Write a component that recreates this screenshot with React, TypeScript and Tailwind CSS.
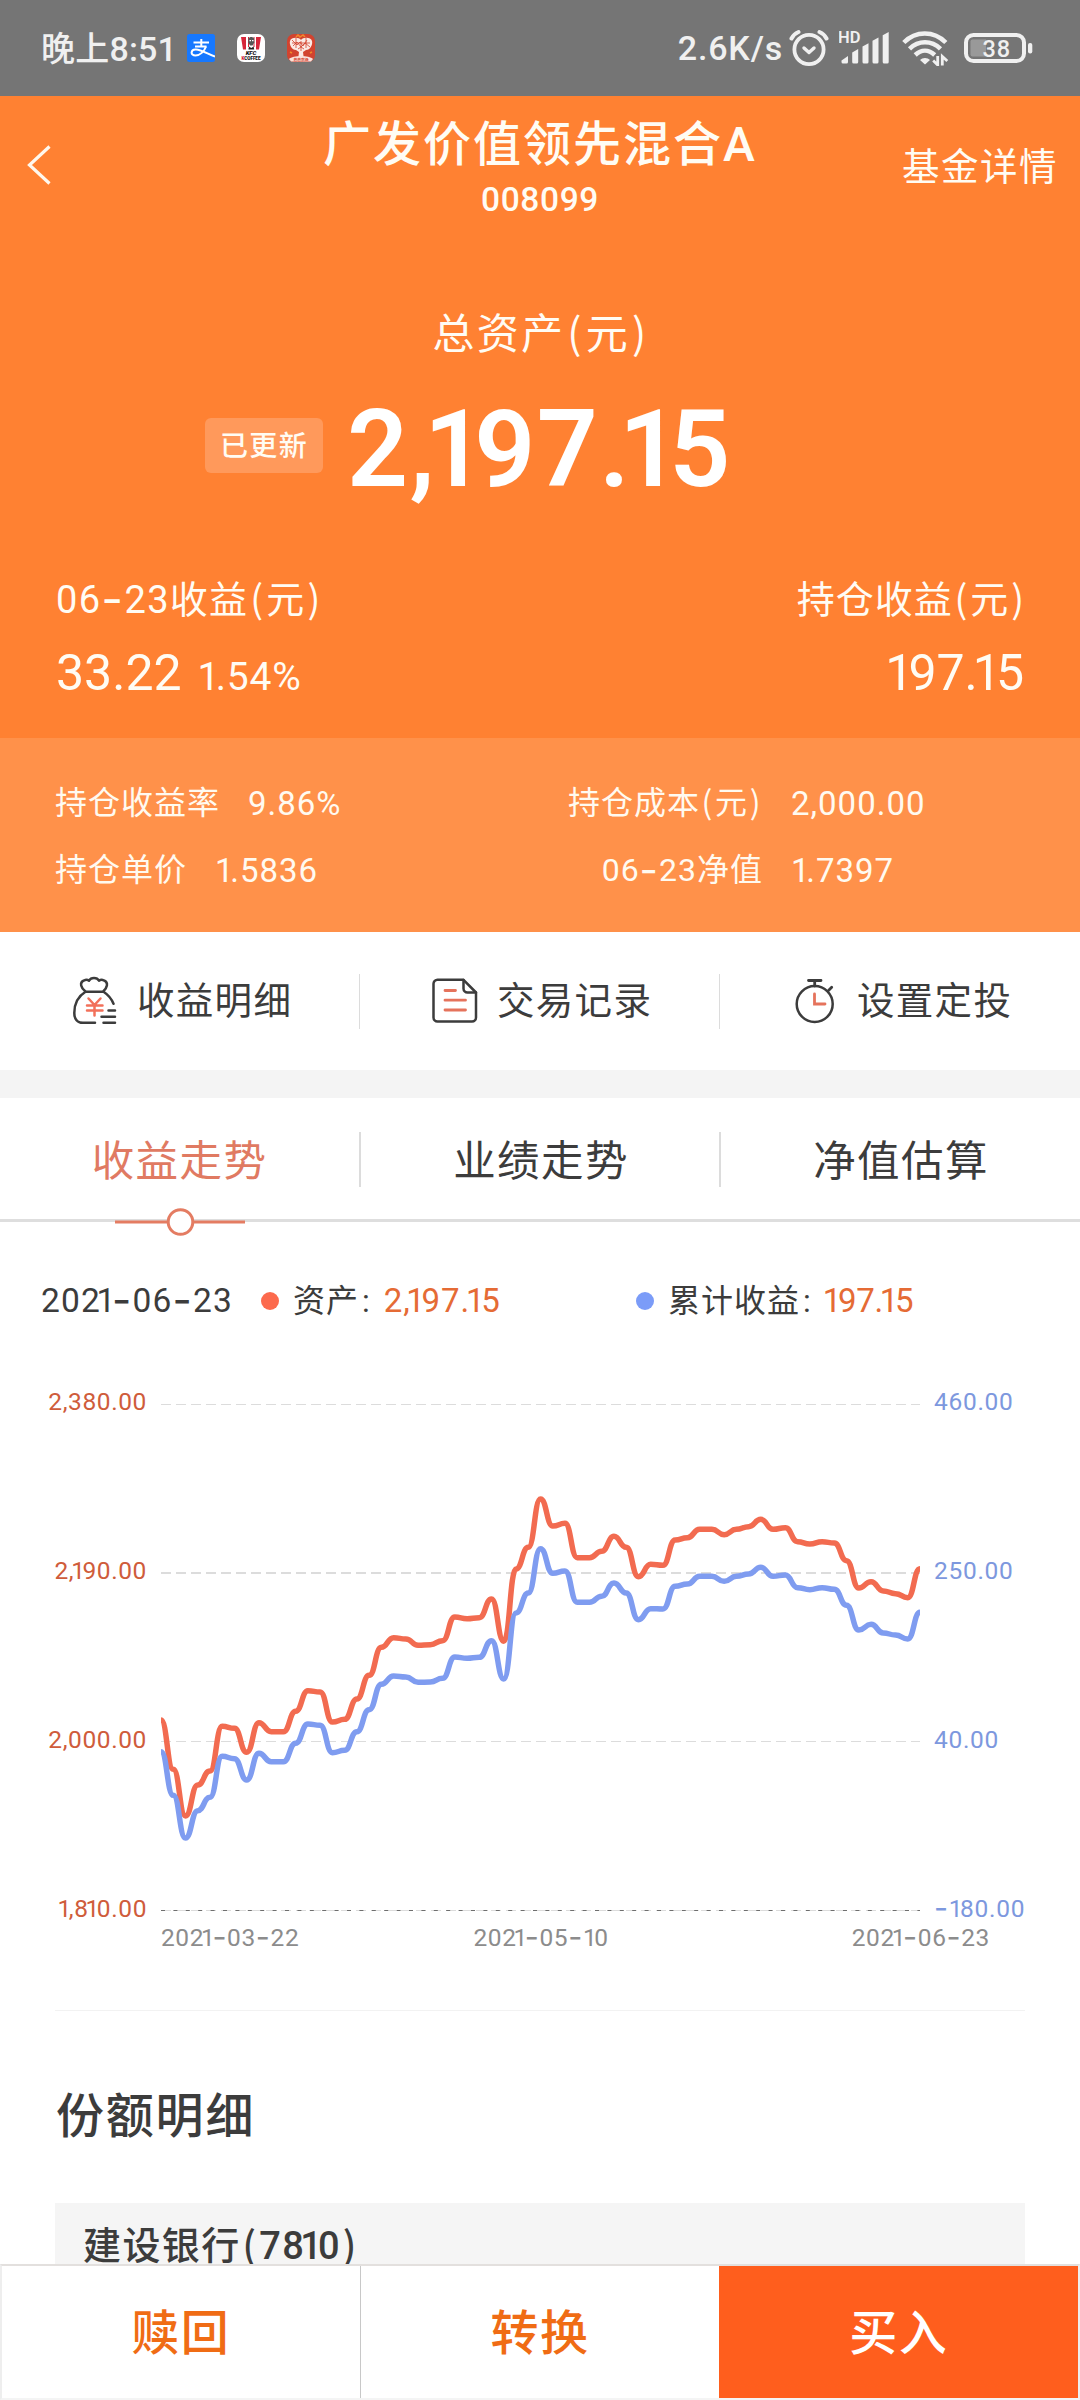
import React from 'react';
import clsx from 'clsx';

interface TextProps {
  children: string;
  className?: string;
}

interface Stat {
  label: string;
  value: string;
}

const leftStats: Stat[] = [
  { label: '持仓收益率', value: '9.86%' },
  { label: '持仓单价', value: '1.5836' },
];

const rightStats: Stat[] = [
  { label: '持仓成本(元)', value: '2,000.00' },
  { label: '06-23净值', value: '1.7397' },
];

const tabs = ['收益走势', '业绩走势', '净值估算'];

const assetAxis = ['2,380.00', '2,190.00', '2,000.00', '1,810.00'];
const profitAxis = ['460.00', '250.00', '40.00', '-180.00'];

// Heights in thirds of a pixel, one entry per trading day
const assetSeries = [
  750, 898, 1038, 945, 903, 769, 775, 847, 758, 785, 785, 724, 662, 666, 756, 748,
  687, 616, 532, 503, 507, 526, 524, 512, 441, 446, 443, 387, 514, 297, 232, 87,
  168, 160, 263, 263, 244, 199, 232, 320, 283, 286, 210, 203, 178, 178, 194, 178,
  170, 148, 178, 173, 215, 222, 215, 219, 272, 354, 335, 363, 371, 383, 296,
];

const profitSeries = [
  845, 976, 1104, 1022, 982, 859, 866, 930, 850, 875, 875, 820, 762, 766, 848, 841,
  785, 719, 643, 618, 621, 637, 636, 625, 561, 565, 562, 512, 627, 429, 369, 236,
  310, 303, 397, 397, 379, 339, 369, 449, 416, 417, 349, 342, 319, 319, 334, 319,
  312, 292, 319, 315, 353, 359, 353, 358, 406, 480, 463, 489, 495, 507, 427,
];

const CHART_WIDTH = 759;
const CHART_OFFSET = 83;

const buildPath = (series: number[]): string => {
  const step = CHART_WIDTH / (series.length - 1);
  return series
    .map((value, i) => {
      const x = i * step;
      const y = value / 3 + CHART_OFFSET;
      if (i === 0) return `M${x} ${y}`;
      const mid = x - step / 2;
      const prev = series[i - 1] / 3 + CHART_OFFSET;
      return `C${mid} ${prev} ${mid} ${y} ${x} ${y}`;
    })
    .join(' ');
};

// Figures with a narrow 1, a long dash and roomy brackets
function Num({ children, className }: TextProps) {
  return (
    <span className={className}>
      {children.split(/([^1](?=1)|[1()-])/).map((part, i) => {
        if (part === '-') {
          return <span key={i} className="align-[-0.07em] font-['Inter'] text-[1.25em] leading-[0]">-</span>;
        }
        if (part === '(' || part === ')') {
          return <span key={i} className="px-[0.05em] font-['Noto_Sans_CJK_SC'] leading-[0]">{part}</span>;
        }
        if (i % 2 === 1) return <span key={i} className="tracking-[-0.1em]">{part}</span>;
        return part;
      })}
    </span>
  );
}

function AlipayIcon() {
  return (
    <svg width="28" height="28" viewBox="0 0 28 28" fill="none">
      <rect width="28" height="28" rx="2.5" fill="#1678ff" />
      <path d="M6.500 8.500h15.500M14.300 5v7.500M8 12.500h11.500" stroke="#fff" strokeWidth="2" />
      <path d="M19 12.500c-1.800 5-6 9-10.500 9-5.500 0-5-6.300.5-6 5 .3 12 4.500 19 7" stroke="#fff" strokeWidth="2" />
    </svg>
  );
}

function KfcIcon() {
  return (
    <svg width="28" height="28" viewBox="0 0 28 28">
      <rect width="28" height="28" rx="7" fill="#fff" />
      <path d="M4 3h5v12.500H6zM11 3h1v10h-1zM16.500 3h1v10h-1zM19 3h5l-2 12.500h-3z" fill="#d6263a" />
      <path d="M11.500 4.500c1-2 4.500-2 5.500 0l.3 4-1.800 3h-2.500l-1.800-3z" fill="#555" />
      <path d="M12.500 6h1.500v1.200h-1.500zM15 6h1.500v1.200H15z" fill="#fff" />
      <path d="M12 12.500l2.300 1.500 2.300-1.500.6 3h-5.800z" fill="#222" />
      <text x="14" y="20.500" textAnchor="middle" fontSize="6" fontWeight="900" fontStyle="italic" fill="#111">KFC</text>
      <text x="14" y="26" textAnchor="middle" fontSize="4.700" fontWeight="900" fill="#111" textLength="19">
        <tspan fill="#d6263a">K</tspan>COFFEE
      </text>
    </svg>
  );
}

function TreeIcon() {
  return (
    <svg width="28" height="28" viewBox="0 0 28 28" fill="none">
      <rect width="28" height="28" rx="7" fill="#d2432f" />
      <path d="M9 3l2-2 2 2 3-2 2 2M3 18l2 1M23 19l2-1" stroke="#f08a2c" strokeWidth="1.500" />
      <path d="M2 25c4-4 20-4 24 0l-2 2.500H4z" fill="#fbe3dc" />
      <path d="M14 6c-2-3-10-3-11 1s2 9 6 9l3 2-.5 4h5l-.5-4 3-2c4 0 7-5 6-9s-9-4-11-1z" fill="#fbe9e4" />
      <path d="M5 6l5 5 3-3 3 4 4-6M6 12l4-4 4 5 4-4 5 4M5 9h18M9 4v10M19 4v10M14 7v10M11 15l3-2 3 2" stroke="#d2432f" strokeWidth=".8" />
      <text x="14" y="26.500" textAnchor="middle" fontSize="3.800" fontWeight="700" fill="#d2432f">芭芭农场</text>
    </svg>
  );
}

function AlarmIcon() {
  return (
    <svg width="40" height="38" viewBox="0 0 40 38" fill="none" stroke="#f0f0f0" strokeLinecap="round">
      <circle cx="20" cy="20.500" r="14.600" strokeWidth="3.800" />
      <path d="M15 19l5 4.500 5-4.500" strokeWidth="3.400" strokeLinejoin="round" />
      <path d="M2.500 9.500c1.500-3 4-5.300 7-6.500M37.500 9.500c-1.500-3-4-5.300-7-6.500" strokeWidth="4" />
    </svg>
  );
}

function SignalIcon() {
  return (
    <svg width="50" height="38" viewBox="0 0 50 38" fill="#f0f0f0">
      <text x="-1" y="14.300" fontSize="16.500" fontWeight="600">HD</text>
      <path d="M2.500 31.500l6.500-4.500v6a1.500 1.500 0 0 1-1.500 1.500h-3.500a1.500 1.500 0 0 1-1.500-1.500z" />
      <path d="M13.200 23.500l6-3.500v13a1.500 1.500 0 0 1-1.500 1.500h-3a1.500 1.500 0 0 1-1.500-1.500z" />
      <path d="M23.500 17.500l6-3.200v18.700a1.500 1.500 0 0 1-1.500 1.500h-3a1.500 1.500 0 0 1-1.500-1.500z" />
      <path d="M33.500 11.700l6-3.200v24.500a1.500 1.500 0 0 1-1.500 1.500h-3a1.500 1.500 0 0 1-1.500-1.500z" />
      <path d="M43.700 6.200l6-3.200v30a1.500 1.500 0 0 1-1.500 1.500h-3a1.500 1.500 0 0 1-1.500-1.500z" />
    </svg>
  );
}

function WifiIcon() {
  return (
    <svg width="47" height="36" viewBox="0 0 47 36" fill="none" stroke="#f0f0f0" strokeWidth="4.500">
      <path d="M1.800 12.500c12-12 30-12 42 0" />
      <path d="M7.500 18.800c9-8.700 22-8.700 31 0" />
      <path d="M13.200 25c6-5.700 13.500-5.700 19.500 0" />
      <path d="M23 34.500l-5-4.500c2.500-2.700 7.500-2.700 10 0z" fill="#f0f0f0" stroke="none" />
      <path d="M35.500 26v8.500l-4-4.500M40 35.500V27l4.500 4.500" stroke="#757575" strokeWidth="6" />
      <path d="M35.700 26v9l-4.500-4.500M40.300 35.500v-9l5 4.500" strokeWidth="2.800" />
    </svg>
  );
}

function BatteryIcon() {
  return (
    <svg width="69" height="30" viewBox="0 0 69 30">
      <rect x="2" y="2" width="58" height="26" rx="7.500" fill="none" stroke="#f0f0f0" strokeWidth="4" />
      <path d="M8.500 6.500H22v17H8.500a2 2 0 0 1-2-2v-13a2 2 0 0 1 2-2z" fill="#999" />
      <rect x="64" y="10" width="4.300" height="10.500" rx="2" fill="#f0f0f0" />
      <text x="18.500" y="23.600" fontSize="23.500" fontWeight="500" fill="#f0f0f0" textLength="27.500">38</text>
    </svg>
  );
}

function BagIcon() {
  return (
    <svg width="46" height="50" viewBox="0 0 46 50" fill="none" stroke="#3c3c3c" strokeWidth="2.500" strokeLinecap="round" strokeLinejoin="round">
      <path d="M13.500 15.800h18M13.500 15.500C9 12 7 6.500 12 4.500c2-1 4-.5 5 .2 2-3.600 8-3.600 10 0 1-.7 3-1.200 5-.2 5 2 3 7.500-.8 11" />
      <path d="M13.500 15.800C5 21 2.300 29 2.300 37c0 6 3 9.800 8.500 9.800H23M31.500 15.800c5 3.200 8 7.200 10 12" />
      <path d="M36.500 34.500h6.500M29.500 40.700H43M31.500 46.800H43" />
      <path d="M16.500 22.500l6 6.500 6-6.500M22.500 29v10.500M15 29.500h15.500M15 34.500h15.500" stroke="#f2705a" />
    </svg>
  );
}

function RecordIcon() {
  return (
    <svg width="46" height="46" viewBox="0 0 46 46" fill="none" stroke="#3c3c3c" strokeWidth="2.500" strokeLinecap="round" strokeLinejoin="round">
      <path d="M31.500 1.800H5.500a4 4 0 0 0-4 4v33.700a4 4 0 0 0 4 4H40a4 4 0 0 0 4-4V14.500z" />
      <path d="M31.500 2v8.500a4 4 0 0 0 4 4H44" />
      <path d="M13 12.500h10.500M13 22.200h20.500M13 32h20.500" stroke="#e5735c" strokeWidth="2.800" />
    </svg>
  );
}

function StopwatchIcon() {
  return (
    <svg width="40" height="46" viewBox="0 0 40 46" fill="none" stroke="#3c3c3c" strokeWidth="2.500" strokeLinecap="round">
      <circle cx="19.700" cy="26" r="18" />
      <path d="M13.500 2.500h12.500M19.700 2.500V8M33.500 12.500l3.200-3.200" strokeWidth="2.800" />
      <path d="M19.500 16v10h10.500" stroke="#e5735c" strokeWidth="2.800" />
    </svg>
  );
}

const actions = [
  { label: '收益明细', icon: <BagIcon />, pad: 'pl-[72px] gap-[19px]' },
  { label: '交易记录', icon: <RecordIcon />, pad: 'pl-[72px] gap-[19px]' },
  { label: '设置定投', icon: <StopwatchIcon />, pad: 'pl-[75px] gap-[22px]' },
];

function StatusBar() {
  return (
    <div className="flex h-24 items-center bg-[#757575] pl-[41px] pr-[47px] text-[34px] leading-none font-medium text-[#f0f0f0]">
      <div className="w-[146px] pt-px tracking-[0.200px] whitespace-nowrap">晚上8:51</div>
      <div className="flex gap-[22px]">
        <AlipayIcon />
        <KfcIcon />
        <TreeIcon />
      </div>
      <div className="ml-auto flex items-center">
        <span className="mr-1.5 tracking-[0.800px]">2.6K/s</span>
        <AlarmIcon />
        <span className="ml-[10px]"><SignalIcon /></span>
        <span className="ml-[13px]"><WifiIcon /></span>
        <span className="ml-[15px]"><BatteryIcon /></span>
      </div>
    </div>
  );
}

function Summary() {
  return (
    <div className="h-[642px] bg-[#ff8132] pt-5 text-[#fffcf4]">
      <div className="grid h-[108px] grid-cols-[1fr_auto_1fr] items-center">
        <svg className="mb-3 ml-[26px]" width="26" height="42" viewBox="0 0 26 42" fill="none" stroke="#fff8ee" strokeWidth="3.200">
          <path d="M23.500 2.500L3.500 21l20 18.500" />
        </svg>
        <div className="text-center">
          <h1 className="text-[48px] leading-[58px] font-medium tracking-[2px]">广发价值领先混合A</h1>
          <div className="text-[33.500px] leading-[52px] font-medium tracking-[0.600px]">008099</div>
        </div>
        <div className="mr-[22px] pb-[7px] text-right text-[37.500px] tracking-[1.500px]">基金详情</div>
      </div>

      <div className="mt-[81px] pl-[3px] text-center text-[42px] leading-[60px] tracking-[2.200px]">
        <Num>总资产(元)</Num>
      </div>

      <div className="mt-6 flex h-[120px] items-center pl-[205px]">
        <div className="mb-[7px] flex h-[55px] w-[118px] items-center justify-center rounded-md bg-[#ff995b] pt-[3px] text-[28px] leading-none font-medium tracking-[1.400px]">
          已更新
        </div>
        <Num className="ml-6 pt-px text-[107px] leading-[120px] font-semibold tracking-[1.300px] text-white">2,197.15</Num>
      </div>

      <div className="mt-[66px] flex justify-between px-[56px]">
        <div>
          <Num className="block text-[38px] leading-[50px] tracking-[1.300px]">06-23收益(元)</Num>
          <div className="mt-[18px] flex items-baseline gap-[16px] leading-[60px]">
            <Num className="text-[50px]">33.22</Num>
            <Num className="text-[39px] tracking-[0.800px]">1.54%</Num>
          </div>
        </div>
        <div className="text-right">
          <Num className="-mr-[3px] block text-[38px] leading-[50px] tracking-[1px]">持仓收益(元)</Num>
          <Num className="mt-[18px] block text-[50px] leading-[60px]">197.15</Num>
        </div>
      </div>
    </div>
  );
}

function Stats() {
  return (
    <div className="flex h-[194px] bg-[#ff914a] pt-8 pl-[55px] text-[32px] leading-[67px] whitespace-nowrap text-[#fffaf0]">
      <div className="w-[513px]">
        {leftStats.map(stat => (
          <div key={stat.label} className="flex gap-7">
            <span className="tracking-[1px]">{stat.label}</span>
            <Num className="text-[33px] tracking-[1px]">{stat.value}</Num>
          </div>
        ))}
      </div>
      <div>
        {rightStats.map(stat => (
          <div key={stat.label} className="flex gap-7">
            <Num className="w-[195px] text-right tracking-[1px]">{stat.label}</Num>
            <Num className="text-[33px] tracking-[1px]">{stat.value}</Num>
          </div>
        ))}
      </div>
    </div>
  );
}

function Actions() {
  return (
    <div className="grid h-[138px] grid-cols-3 items-center text-[37.500px] leading-none tracking-[1.300px] text-[#3c3c3c]">
      {actions.map((action, i) => (
        <div
          key={action.label}
          className={clsx('flex h-[55px] items-center', action.pad, i < 2 && 'border-r border-[#dcdcdc]')}
        >
          {action.icon}
          <span className="pt-0.5">{action.label}</span>
        </div>
      ))}
    </div>
  );
}

function Tabs() {
  return (
    <div className="relative h-[124px] border-b-[3px] border-[#dedede]">
      <div className="grid grid-cols-3 pt-[34px] text-center text-[42.500px] leading-[55px] tracking-[1.400px] text-[#3c3c3c]">
        {tabs.map((tab, i) => (
          <div
            key={tab}
            className={clsx('h-[55px] pt-[2px]', i === 0 ? 'pr-px text-[#e07a62]' : '-ml-px border-l-2 border-[#dcdcdc] pl-px')}
          >
            {tab}
          </div>
        ))}
      </div>
      <svg className="absolute -bottom-[17px] left-[115px]" width="130" height="28" viewBox="0 0 130 28" stroke="#e47c62" strokeWidth="3">
        <path d="M0 14h130" />
        <circle cx="65.500" cy="14" r="12.300" fill="#fff" />
      </svg>
    </div>
  );
}

function Legend() {
  return (
    <div className="flex h-10 items-center pl-[41px] text-[32px] leading-10 text-[#3c3c3c]">
      <Num className="w-[220px] text-[33.500px] tracking-[1.200px]">2021-06-23</Num>
      <span className="mr-[14px] size-[18px] rounded-full bg-[#fc6a4d]" />
      <div className="w-[343px] tracking-[1px]">
        资产<span className="pl-[3px]">:</span>{' '}
        <Num className="ml-[4px] text-[33px] tracking-[0.900px] text-[#e56b35]">2,197.15</Num>
      </div>
      <span className="mr-[14px] size-[18px] rounded-full bg-[#7b9cf8]" />
      <div className="tracking-[1px]">
        累计收益<span className="pl-[3px]">:</span>{' '}
        <Num className="ml-[2px] text-[33px] tracking-[-0.300px] text-[#e56b35]">197.15</Num>
      </div>
    </div>
  );
}

function Chart() {
  return (
    <div className="mt-[66px]">
      <div className="flex h-[537px] text-[24.500px] leading-[30px]">
        <div className="flex w-[161px] flex-col justify-between pr-[14px] text-right text-[#cf5c3b]">
          {assetAxis.map(label => (
            <Num key={label} className="h-[30px] tracking-[0.600px]">{label}</Num>
          ))}
        </div>
        <svg width="759" height="537" viewBox="0 0 759 537" fill="none">
          <g stroke="#dcdcdc" strokeDasharray="10 5">
            <path d="M0 17.500h759M0 354.500h759M0 523.500h759" strokeWidth="1" />
            <path d="M0 186h759" strokeWidth="2" />
          </g>
          <path d="M0 523.500h759" stroke="#6e6e6e" strokeDasharray="4 8.400" />
          <path d={buildPath(assetSeries)} stroke="#f26b50" strokeWidth="5.500" />
          <path d={buildPath(profitSeries)} stroke="#7f9cf0" strokeWidth="5.500" />
        </svg>
        <div className="flex flex-col justify-between pl-[14px] text-[#7d98de]">
          {profitAxis.map(label => (
            <Num key={label} className="h-[30px] tracking-[0.700px]">{label}</Num>
          ))}
        </div>
      </div>
      <div className="-mt-px flex h-[30px] justify-between pr-[90px] pl-[161px] text-[24.500px] leading-[30px] tracking-[0.600px] text-[#8c8c8c]">
        <Num>2021-03-22</Num>
        <Num className="-ml-[69px]">2021-05-10</Num>
        <Num>2021-06-23</Num>
      </div>
    </div>
  );
}

function BottomBar() {
  return (
    <div className="grid h-[136px] grid-cols-3 border-x-2 border-t-2 border-b-2 border-x-[#eee] border-t-[#e3e0de] border-b-[#f4f4f4] bg-white text-center text-[48px] leading-[128px] font-medium tracking-[1.500px] text-[#f06c14]">
      <button className="border-r border-[#c8c8c8] pt-1">赎回</button>
      <button className="pt-1">转换</button>
      <button className="bg-[#ff5e1d] pt-1 text-white">买入</button>
    </div>
  );
}

export default function App() {
  return (
    <div className="flex h-[2400px] w-[1080px] flex-col overflow-hidden bg-white font-['Roboto','Noto_Sans_CJK_SC',sans-serif]">
      <StatusBar />
      <Summary />
      <Stats />
      <Actions />
      <div className="h-7 bg-[#f4f4f4]" />
      <Tabs />
      <div className="h-[1042px] overflow-hidden pt-[59px]">
        <Legend />
        <Chart />
        <div className="mx-[55px] mt-[57px] border-t border-[#f2f2f2] text-[#3c3c3c]">
          <h2 className="mt-[75px] pl-px text-[48px] leading-[62px] font-medium tracking-[1.800px]">份额明细</h2>
          <div className="mt-[55px] h-20 bg-[#f5f5f5] pt-[17px] pl-7 text-[38px] leading-[52px] font-medium tracking-[1.400px]">
            <Num>建设银行(7810)</Num>
          </div>
        </div>
      </div>
      <BottomBar />
    </div>
  );
}
